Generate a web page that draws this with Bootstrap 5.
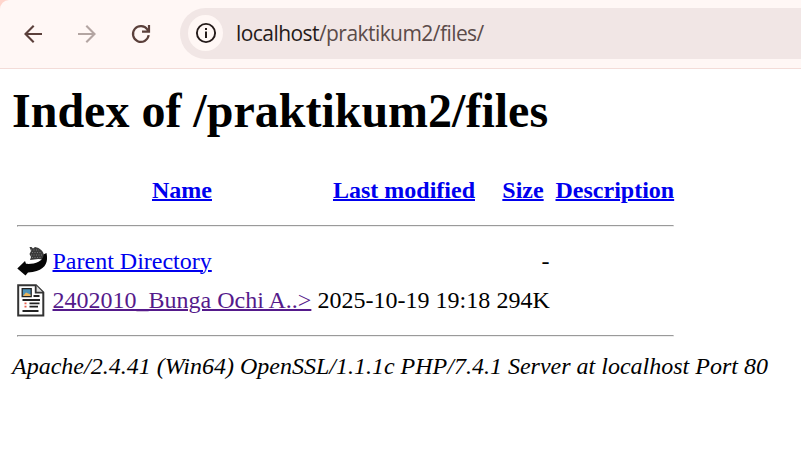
<!DOCTYPE html>
<html lang="en">
<head>
<meta charset="utf-8">
<title>Index of /praktikum2/files</title>
<link href="https://cdn.jsdelivr.net/npm/bootstrap@5.3.0/dist/css/bootstrap.min.css" rel="stylesheet">
<style>
body{font-family:"Liberation Serif","Times New Roman",serif;font-size:24px;line-height:27px;color:#000;background:#fff;overflow:hidden}
.browser-top{background:#ffd5cc}
.toolbar{height:69px;background:#fff7f5;border-bottom:1px solid #f3dcd8;border-top-left-radius:9px;padding-left:20px}
.toolbar svg{display:block}
.tool{width:54px;color:#5b403b}
.tool.off{color:#b3a5a2}
.omnibox{height:51px;background:#f1e6e5;border-radius:26px 0 0 26px;margin-left:-2px;margin-top:-2px;padding-left:8px}
.info{width:35px;height:36px;color:#241a19;background:#fff7f5}
.url{font-family:"Open Sans","Segoe UI",sans-serif;font-size:21px;letter-spacing:-.56px;color:#5b4b49;margin-left:13px;white-space:nowrap}
.url span{color:#241a19}
.page{padding:14px 12px 0}
h1{font-size:48px;line-height:55px;font-weight:700;margin:0 0 34px;white-space:nowrap}
.listing{border-collapse:separate;border-spacing:3px;table-layout:fixed;width:666px;margin:0}
.listing th,.listing td{padding:1.5px;white-space:nowrap;vertical-align:middle}
.listing tr.heads th{padding-bottom:4.5px}
.listing tr.entry{height:36px}
.listing svg{display:block}
.listing hr{margin:12px 0;border:1px solid;border-color:#9a9a9a #eee #eee #9a9a9a;height:2px;opacity:1}
a{color:#00e;text-decoration:underline;text-decoration-thickness:2px}
a:hover{color:#00e}
a.seen{color:#551a8b}
address{font-style:italic;line-height:27px;white-space:nowrap}
</style>
<script src="https://cdn.jsdelivr.net/npm/bootstrap@5.3.0/dist/js/bootstrap.bundle.min.js"></script>
</head>
<body>
<header class="browser-top">
<nav class="toolbar d-flex align-items-center">
<div class="tool"><svg width="26" height="26" viewBox="0 0 26 26" fill="none" stroke="currentColor" stroke-width="2.1"><path d="M22 13H5.500M13.700 4.800 5.500 13l8.200 8.200"/></svg></div>
<div class="tool off"><svg width="26" height="26" viewBox="0 0 26 26" fill="none" stroke="currentColor" stroke-width="2.1"><path d="M4 13h16.500M12.300 4.800 20.500 13l-8.200 8.200"/></svg></div>
<div class="tool"><svg width="26" height="26" viewBox="0 0 26 26" fill="none" stroke="currentColor" stroke-width="2.2"><path d="M20.700 14.200a7.900 7.900 0 1 1-1.300-5.700l1.600 2M21 4v6.700h-7"/></svg></div>
<div class="omnibox flex-grow-1 d-flex align-items-center">
<div class="info rounded-circle d-flex align-items-center justify-content-center"><svg width="22" height="22" viewBox="0 0 22 22"><circle cx="11" cy="11" r="9.1" fill="none" stroke="currentColor" stroke-width="1.9"/><path fill="currentColor" d="M10 6h2v2h-2zM10 9.500h2V16h-2z"/></svg></div>
<div class="url"><span>localhost</span>/praktikum2/files/</div>
</div>
</nav>
</header>
<main class="page">
<h1>Index of /praktikum2/files</h1>
<table class="listing">
<colgroup><col style="width:33px"><col style="width:262px"><col style="width:176px"><col style="width:56px"><col style="width:121px"></colgroup>
<tr class="heads text-center"><th></th><th><a href="#">Name</a></th><th><a href="#">Last modified</a></th><th><a href="#">Size</a></th><th><a href="#">Description</a></th></tr>
<tr><th colspan="5"><hr></th></tr>
<tr class="entry"><td><svg width="30" height="33" viewBox="0 0 30 33"><path fill="#3a3a3a" d="M12.500 2h2l1.500 1.500L18 2c5 1 8.500 4 8.800 8l-.5 4.500-5-.5-8.300 1 1-3-1.500-3 1.500-3z"/><path fill="none" stroke="#888" stroke-width=".8" stroke-dasharray="1 1.500" d="M14 5h8M15 7.500h10M14 10h11M15 12.500h10"/><path fill="#050505" d="M26.300 9.500 29.500 8c2 10-1 18-18.500 19.500L8.500 30.500.3 23.500 8 16l1 2.800C17 19.500 27 16.500 26.300 9.500z"/></svg></td><td><a href="#">Parent Directory</a></td><td></td><td class="text-end">-</td><td></td></tr>
<tr class="entry"><td><svg width="30" height="33" viewBox="0 0 30 33"><path fill="#fff" stroke="#333" stroke-width="2" d="M1.200 1.200h17.800l7.300 7.300v23H1.200z"/><path fill="#ddd" stroke="#333" stroke-width="1.800" d="M18.700 1v7.700h7.500"/><path fill="#4d92b8" stroke="#222" stroke-width="1.300" d="M5.200 4.700h9v8h-9z"/><path fill="#edb55a" d="m6 12 3-3.500 4.500 2V12z"/><path stroke="#222" stroke-width="1.800" d="M16.500 12h6M5.500 16h17.500M12.500 19.300h10M12.500 22.700h8.500M5.500 27h16"/><path stroke="#e8604f" stroke-width="1.800" d="M7.500 19.300h2M7.500 22.700h2"/></svg></td><td><a class="seen" href="#">2402010_Bunga Ochi A..&gt;</a></td><td>2025-10-19 19:18</td><td class="text-end">294K</td><td></td></tr>
<tr><th colspan="5"><hr></th></tr>
</table>
<address class="mb-0">Apache/2.4.41 (Win64) OpenSSL/1.1.1c PHP/7.4.1 Server at localhost Port 80</address>
</main>
</body>
</html>
